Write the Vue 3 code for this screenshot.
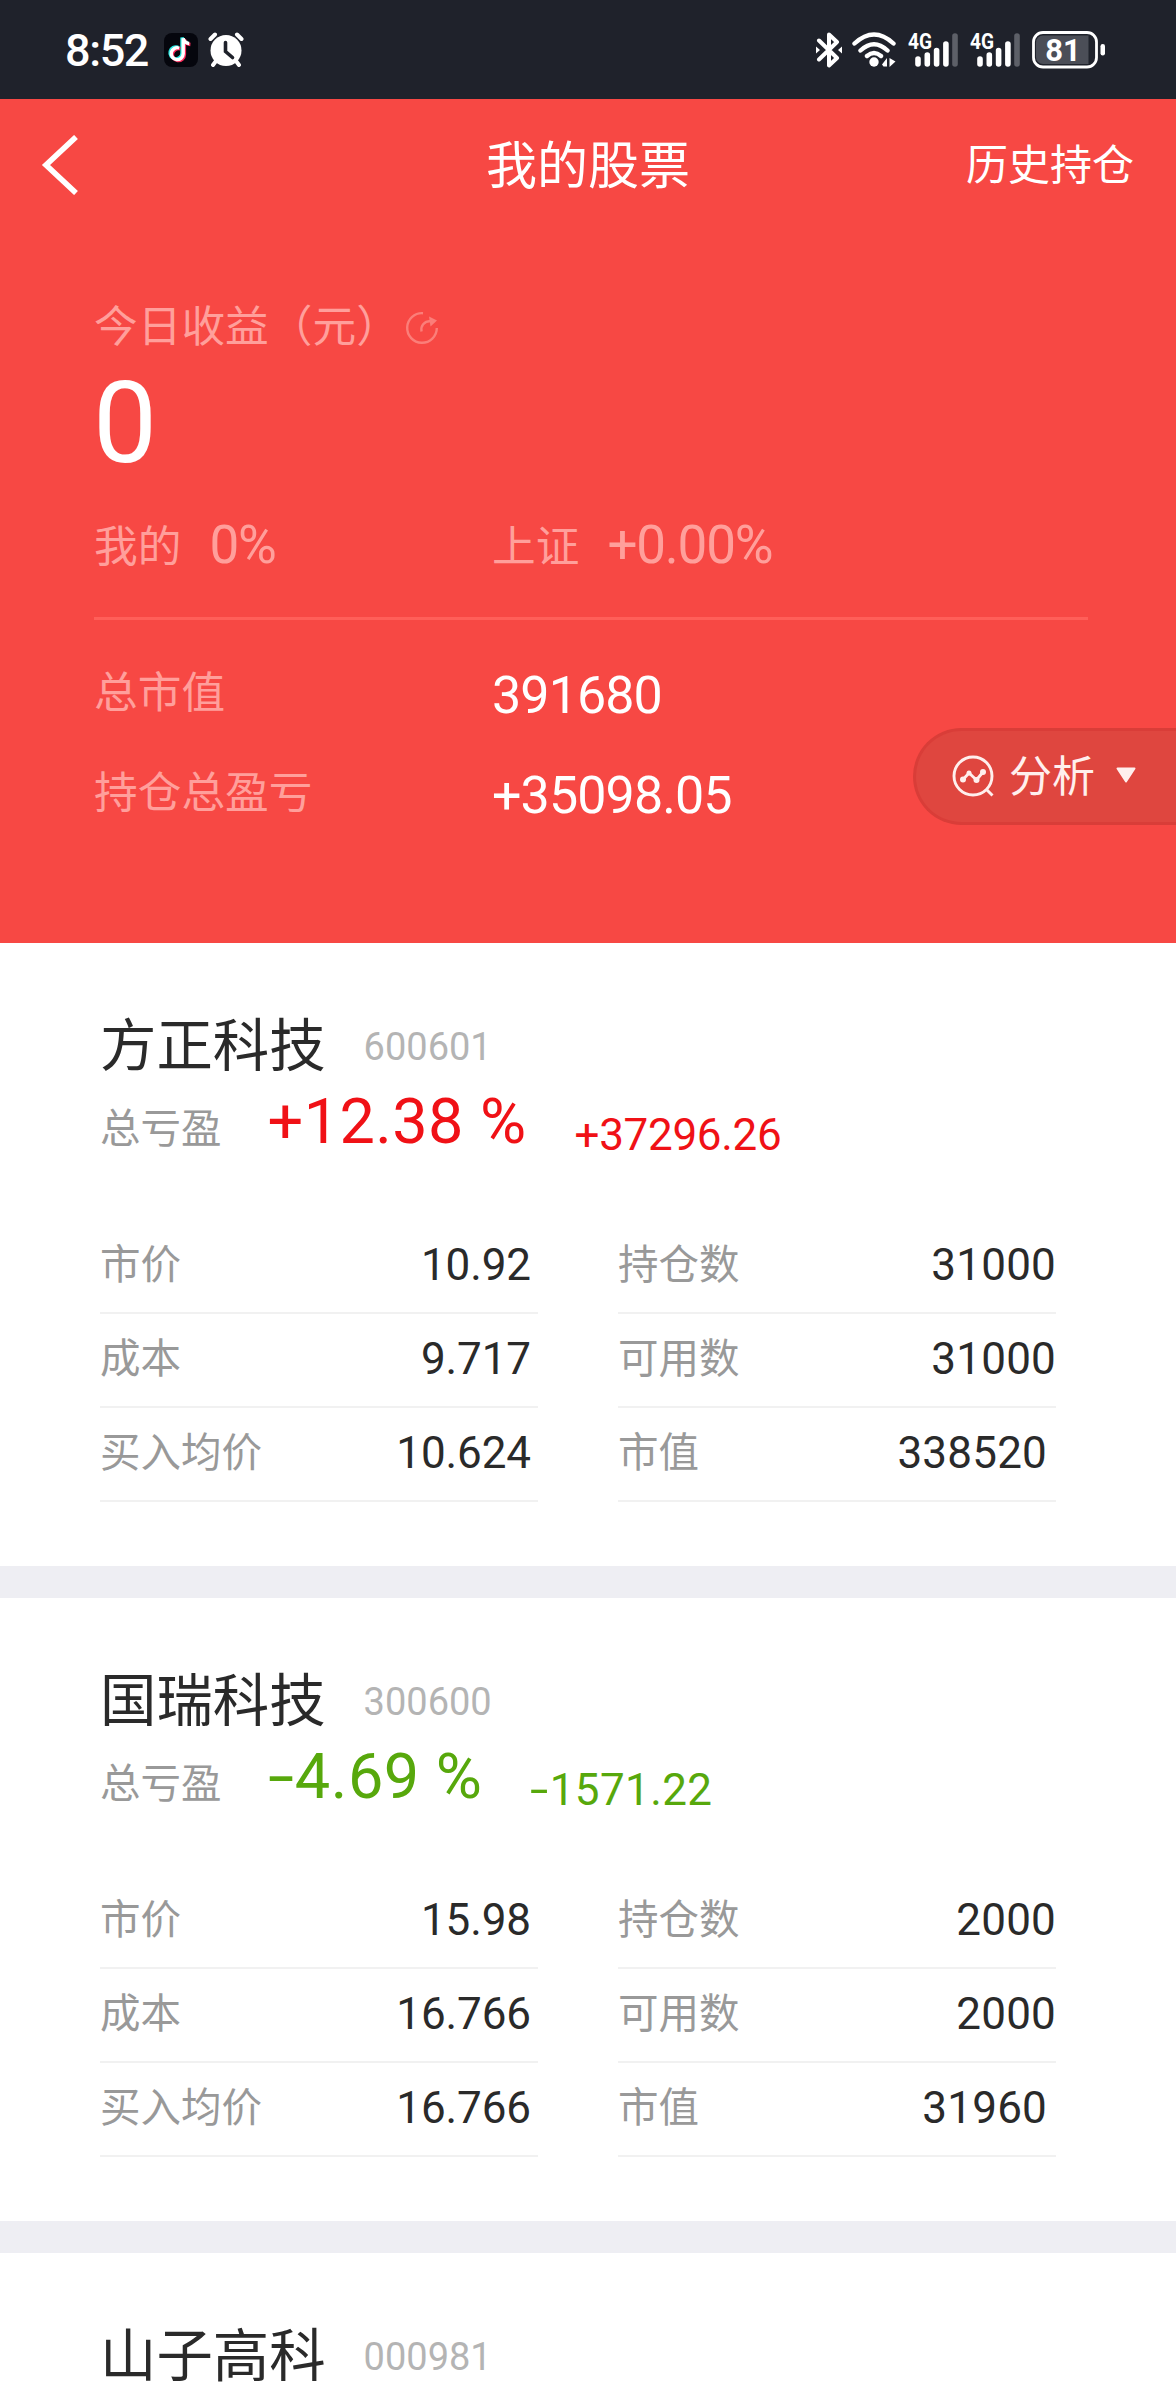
<script setup>
const stocks = [
  {
    name: '方正科技',
    code: '600601',
    sign: '+',
    percent: '12.38 %',
    amount: '37296.26',
    left: [['市价', '10.92'], ['成本', '9.717'], ['买入均价', '10.624']],
    right: [['持仓数', '31000'], ['可用数', '31000'], ['市值', '338520']],
  },
  {
    name: '国瑞科技',
    code: '300600',
    sign: '-',
    percent: '4.69 %',
    amount: '1571.22',
    left: [['市价', '15.98'], ['成本', '16.766'], ['买入均价', '16.766']],
    right: [['持仓数', '2000'], ['可用数', '2000'], ['市值', '31960']],
  },
  { name: '山子高科', code: '000981', left: [], right: [] },
]
</script>

<template>
  <div class="phone">
    <div class="status">
      <span class="time">8:52</span>
      <svg class="tiktok" width="34" height="34" viewBox="0 0 34 34">
        <rect width="34" height="34" rx="8" fill="#05060d" />
        <g fill="none" stroke-width="3.4">
          <path d="M16 14.8a6 6 0 1 0 4 5.800V5c.6 3.400 2.600 5 6 5.300" stroke="#25e6df" transform="translate(-2 -.6)" />
          <path d="M16 14.800a6 6 0 1 0 4 5.800V5c.6 3.400 2.600 5 6 5.300" stroke="#fb2b5b" transform="translate(.4 1.200)" />
          <path d="M16 14.800a6 6 0 1 0 4 5.800V5c.6 3.400 2.600 5 6 5.300" stroke="#fff" transform="translate(-.8 .2)" />
        </g>
      </svg>
      <svg class="alarm" width="36" height="36" viewBox="0 0 36 36">
        <g fill="none" stroke="#fff" stroke-width="4" stroke-linecap="round">
          <path d="M2.500 7 7 2.500M33.500 7 29 2.500M8 29l-3 4M28 29l3 4" />
        </g>
        <circle cx="18" cy="18.500" r="15.500" fill="#fff" />
        <path d="M17.500 10.500v9l7 6" fill="none" stroke="#1f222b" stroke-width="3.600" stroke-linecap="round" />
      </svg>
      <span class="spacer"></span>
      <svg class="bt" width="26" height="36" viewBox="0 0 26 36">
        <path d="M3 8.500 21 26l-8 7.500V2.500L21 10 3 27.500" fill="none" stroke="#fff" stroke-width="4" stroke-linejoin="round" stroke-linecap="round" />
        <path d="M0 14.500 4 18 0 21.500ZM26 14.500 22 18l4 3.500Z" fill="#fff" />
      </svg>
      <svg class="wifi" width="45" height="36" viewBox="0 0 45 36">
        <g fill="none" stroke="#fff" stroke-width="4.400" stroke-linecap="round">
          <path d="M2.500 11.500Q22 -6.500 41.500 11.500M8.500 18.500Q22 6 35.500 18.500M15 24Q22 18 29 24" />
        </g>
        <circle cx="22" cy="30" r="4.700" fill="#fff" />
        <path d="M30 32.500 35 26v8.500h-3.500ZM37.500 26l6 3.500-6 5.500Z" fill="#fff" />
      </svg>
      <svg v-for="n in 2" :key="n" class="signal" width="52" height="56" viewBox="-2 -10 52 56">
        <text x="0" y="16.500" class="net" textLength="24" lengthAdjust="spacingAndGlyphs">4G</text>
        <g stroke="#fff" stroke-width="5.600" stroke-linecap="round">
          <path d="M10 27v5M19.300 23v9M28.600 18.500V32M37.900 12v20" />
          <path d="M47 4v28" stroke="#5d6068" />
        </g>
      </svg>
      <svg class="battery" width="74" height="38" viewBox="0 0 74 38">
        <rect x="1.500" y="1.500" width="63" height="34.500" rx="9.500" fill="none" stroke="#fff" stroke-width="2.800" />
        <path d="M11 4.500h45.500v28.500H11a7 7 0 0 1-7-7V11.500a7 7 0 0 1 7-7Z" fill="#4b4e57" />
        <rect x="68.500" y="13" width="4.500" height="11.500" rx="2.200" fill="#fff" />
        <text x="31" y="29.500" class="charge" text-anchor="middle">81</text>
      </svg>
    </div>

    <section class="hero">
      <header class="bar">
        <div class="side">
          <svg width="38" height="60" viewBox="0 0 38 60">
            <path d="M35 2 5 30l30 28" fill="none" stroke="#fff" stroke-width="5.600" />
          </svg>
        </div>
        <h1>我的股票</h1>
        <div class="side end">历史持仓</div>
      </header>

      <div class="summary">
        <div class="line faded">
          <span>今日收益（元）</span>
          <svg class="share" width="34" height="34" viewBox="0 0 34 34">
            <g fill="none" stroke="#fb7e79" stroke-width="2.400">
              <path d="M18 2.200A14.800 14.800 0 1 0 31.800 17" />
              <path d="M16.500 20.500c-1-6 2.500-10 9-10.500" />
            </g>
            <path d="M24 5.500 32 9.500l-6.500 6Z" fill="#fb7e79" />
          </svg>
        </div>
        <div class="today num">0</div>
        <div class="line faded compare">
          <div class="half"><span>我的</span><span class="num rate">0%</span></div>
          <div class="half"><span>上证</span><span class="num rate">+0.00%</span></div>
        </div>
        <div class="divider"></div>
        <div class="line total">
          <div class="half faded">总市值</div><div class="num sum">391680</div>
        </div>
        <div class="line total">
          <div class="half faded">持仓总盈亏</div><div class="num sum">+35098.05</div>
        </div>
      </div>

      <div class="analyse">
        <svg width="42" height="42" viewBox="0 0 42 42">
          <g fill="none" stroke="#ffefed" stroke-width="2.900">
            <circle cx="21" cy="21" r="19" />
            <path d="m34 34 6.500 6.500M11 24.500 17 18l7.500 7 6.500-8" />
          </g>
          <g fill="#ffefed">
            <circle cx="11" cy="24.500" r="3" /><circle cx="17" cy="18" r="2.500" />
            <circle cx="24.500" cy="25" r="3" /><circle cx="31" cy="17" r="3" />
          </g>
        </svg>
        <span>分析</span>
        <svg class="caret" width="20" height="16" viewBox="0 0 20 16">
          <path d="M1.500 1.500h17L10 14.500Z" fill="#ffefed" stroke="#ffefed" stroke-width="2" stroke-linejoin="round" />
        </svg>
      </div>
    </section>

    <article v-for="s in stocks" :key="s.code" class="card">
      <div class="title"><h2>{{ s.name }}</h2><span class="num code">{{ s.code }}</span></div>
      <template v-if="s.percent">
        <div class="profit" :class="{ loss: s.sign === '-' }">
          <span class="label">总亏盈</span>
          <span class="num percent"><i>{{ s.sign }}</i>{{ s.percent }}</span>
          <span class="num amount"><i>{{ s.sign }}</i>{{ s.amount }}</span>
        </div>
        <div class="columns">
          <div v-for="(col, c) in [s.left, s.right]" :key="c" class="column" :class="{ second: c === 1 }">
            <div v-for="r in col" :key="r[0]" class="row">
              <span class="label">{{ r[0] }}</span><span class="num value">{{ r[1] }}</span>
            </div>
          </div>
        </div>
      </template>
    </article>
  </div>
</template>

<style>
body { margin: 0; background: #fff; }
</style>

<style scoped>
.phone {
  width: 1176px;
  height: 2400px;
  overflow: hidden;
  background: #fff;
  font-family: "Noto Sans CJK SC", sans-serif;
  color: #2a2a2a;
}
.num { font-family: Roboto, sans-serif; white-space: nowrap; }
h1, h2 { margin: 0; font-weight: 400; }
svg { display: block; flex: none; }

.status {
  display: flex;
  align-items: center;
  box-sizing: border-box;
  height: 99px;
  padding: 0 70px 0 65px;
  background: #1f222b;
  color: #fff;
}
.time { width: 85px; padding-top: 2px; font: 500 45px/97px Roboto, sans-serif; letter-spacing: -1.4px; white-space: nowrap; }
.tiktok { margin-left: 14px; }
.alarm { margin-left: 10px; }
.spacer { flex: 1; }
.bt { margin-right: 10px; }
.signal { margin-left: 9px; }
.net { font: 700 22px Roboto, sans-serif; fill: #fff; }
.signal + .signal { margin-left: 10px; }
.battery { margin-left: 12px; }
.charge { font: 700 31px Roboto, sans-serif; fill: #fff; }

.hero { position: relative; height: 844px; background: #f74844; color: #fff; }
.bar { display: flex; align-items: center; height: 126px; padding: 0 42px 0 41px; }
.side { flex: 1; padding-top: 5px; }
.bar h1 { padding-left: 1px; font-size: 51px; line-height: 60px; }
.end { padding-top: 0; text-align: right; font-size: 42px; line-height: 60px; }
.summary { padding: 68px 88px 0 94px; }
.line { display: flex; align-items: center; height: 60px; font-size: 43.700px; line-height: 62px; }
.faded { color: #ff9f9b; }
.share { margin: 10px 0 0 5px; }
.today { margin-top: 13px; font-size: 114px; line-height: 114px; text-indent: -1px; }
.compare { margin-top: 33px; }
.half { display: flex; width: 398px; flex: none; }
.rate { margin-left: 28px; padding-top: 6px; font-size: 53px; line-height: 54px; letter-spacing: -1.200px; }
.divider { height: 3px; margin: 44px 0 39px; background: #ff5f59; }
.total + .total { margin-top: 40px; }
.sum { padding-top: 13px; font-size: 52px; line-height: 48px; letter-spacing: -.9px; }
.analyse {
  position: absolute;
  right: 0;
  top: 629px;
  display: flex;
  align-items: center;
  box-sizing: border-box;
  width: 263px;
  height: 97px;
  padding-left: 36px;
  border: 3px solid #d93d38;
  border-right: 0;
  border-radius: 49px 0 0 49px;
  background: #df463f;
  color: #ffefed;
  font-size: 43px;
  line-height: 86px;
}
.analyse svg { margin-bottom: 2px; }
.analyse span { margin-left: 15px; padding-bottom: 7px; }
.analyse .caret { margin: 0 0 3px 21px; }

.card { box-sizing: border-box; height: 655px; padding: 60px 120px 0 100px; border-bottom: 32px solid #eeeef3; }
.title { display: flex; height: 80px; line-height: 78px; }
.title h2 { font-size: 56.400px; }
.code { margin-left: 38px; padding-top: 7px; font-size: 38px; line-height: 74px; color: #b4b4b4; }
.profit { display: flex; height: 60px; margin-top: 12px; color: #f01116; }
.loss { color: #57a80c; }
.label { font-size: 40.500px; line-height: 62px; color: #999; }
.percent { margin-left: 46px; padding-bottom: 7px; font-size: 63px; line-height: 53px; letter-spacing: .4px; }
.amount { margin-left: 48px; padding-top: 19px; font-size: 44px; line-height: 42px; letter-spacing: -.3px; }
.num i { font-style: normal; }
.loss i { display: inline-block; transform: scaleX(1.5); transform-origin: 0 50%; margin-right: .15em; }
.loss .percent { letter-spacing: .5px; }
.loss .amount { letter-spacing: .4px; }
.columns { display: flex; justify-content: space-between; margin-top: 65px; }
.column { width: 438px; }
.row {
  display: flex;
  justify-content: space-between;
  box-sizing: border-box;
  height: 94px;
  padding: 11px 7px 0 0;
  border-bottom: 2px solid #f1f1f1;
}
.value { padding-top: 8px; font-size: 44px; line-height: 52px; letter-spacing: -.1px; }
.second .value { letter-spacing: .2px; }
.second .row { padding-right: 0; }
.second .row:last-child { padding-right: 9px; }
</style>
